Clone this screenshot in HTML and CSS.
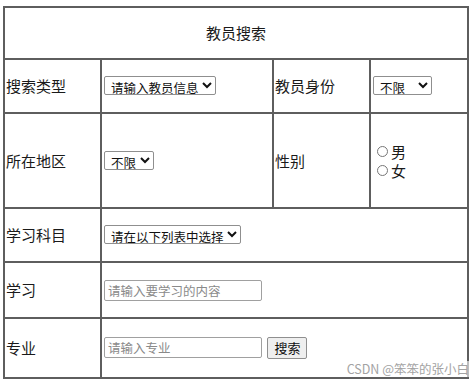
FILE: index.html
```html
<!DOCTYPE html>
<html lang="zh-CN">
<head>
  <meta charset="UTF-8">
  <title>教员搜索</title>
  <link rel="stylesheet" href="styles.css">
</head>
<body>
  <div class="page">
    <table class="search-table">
      <colgroup>
        <col class="col-label">
        <col class="col-field">
        <col class="col-label2">
        <col class="col-field2">
      </colgroup>
      <tr class="row-head">
        <th colspan="4">教员搜索</th>
      </tr>
      <tr class="row-type">
        <td>搜索类型</td>
        <td>
          <select class="field-select">
            <option>请输入教员信息</option>
          </select>
        </td>
        <td>教员身份</td>
        <td>
          <select class="field-select identity-select">
            <option>不限</option>
          </select>
        </td>
      </tr>
      <tr class="row-area">
        <td>所在地区</td>
        <td>
          <select class="field-select">
            <option>不限</option>
          </select>
        </td>
        <td>性别</td>
        <td>
          <label class="radio-line"><input type="radio" name="sex">男</label>
          <label class="radio-line"><input type="radio" name="sex">女</label>
        </td>
      </tr>
      <tr class="row-subject">
        <td>学习科目</td>
        <td colspan="3">
          <select class="field-select">
            <option>请在以下列表中选择</option>
          </select>
        </td>
      </tr>
      <tr class="row-study">
        <td>学习</td>
        <td colspan="3">
          <input type="text" class="field-input" placeholder="请输入要学习的内容">
        </td>
      </tr>
      <tr class="row-major">
        <td>专业</td>
        <td colspan="3">
          <input type="text" class="field-input" placeholder="请输入专业">
          <button class="search-button">搜索</button>
        </td>
      </tr>
    </table>
    <div class="watermark">CSDN @笨笨的张小白</div>
  </div>
</body>
</html>
```

FILE: styles.css
```css
* {
  box-sizing: border-box;
}

body {
  margin: 0;
  background: #ffffff;
  color: #1a1a1a;
  font-family: "Noto Sans CJK SC", "Noto Sans", sans-serif;
  font-size: 15px;
}

.page {
  position: relative;
  width: 474px;
  height: 384px;
  padding: 6px 0 0 3px;
}

.search-table {
  width: 466px;
  border-collapse: collapse;
  table-layout: fixed;
  border: 2px solid #707070;
}

.col-label { width: 97px; }
.col-field { width: 172px; }
.col-label2 { width: 97px; }
.col-field2 { width: 98px; }

.search-table th,
.search-table td {
  border: 2px solid #5e5e5e;
  padding: 0 1px;
  vertical-align: middle;
  text-align: left;
  font-weight: normal;
  line-height: 18px;
}

.search-table th {
  text-align: center;
}

.row-head { height: 52px; }
.row-type { height: 54px; }
.row-area { height: 95px; }
.row-subject { height: 54px; }
.row-study { height: 56px; }
.row-major { height: 60px; }

.field-select {
  height: 19px;
  margin-left: 1px;
  padding: 0 0 0 2px;
  border: 1px solid #8f8f8f;
  border-radius: 2px;
  background: #ffffff;
  color: #111;
  font-family: "Noto Sans CJK SC", sans-serif;
  font-size: 12.5px;
  line-height: 17px;
}

.identity-select {
  width: 59px;
}

.radio-line {
  display: flex;
  align-items: center;
  height: 19px;
  padding-left: 5px;
  line-height: 19px;
}

.radio-line input {
  width: 11px;
  height: 11px;
  margin: 0 3px 0 0;
}

.field-input {
  width: 158px;
  height: 21px;
  margin-left: 1px;
  padding: 0 3px;
  border: 1px solid #a0a0a0;
  border-radius: 2px;
  font-family: "Noto Sans CJK SC", sans-serif;
  font-size: 12.5px;
  color: #111;
}

.field-input::placeholder {
  color: #8a8a8a;
}

.search-button {
  height: 22px;
  margin-left: 2px;
  padding: 0 6px;
  border: 1px solid #8f8f8f;
  border-radius: 2px;
  background: #efefef;
  font-family: "Noto Sans CJK SC", sans-serif;
  font-size: 13px;
  color: #111;
  line-height: 18px;
}

.watermark {
  position: absolute;
  right: 5px;
  top: 361px;
  color: #a3a3a3;
  font-size: 12.5px;
  line-height: 16px;
  background: rgba(255, 255, 255, 0.6);
}
```
